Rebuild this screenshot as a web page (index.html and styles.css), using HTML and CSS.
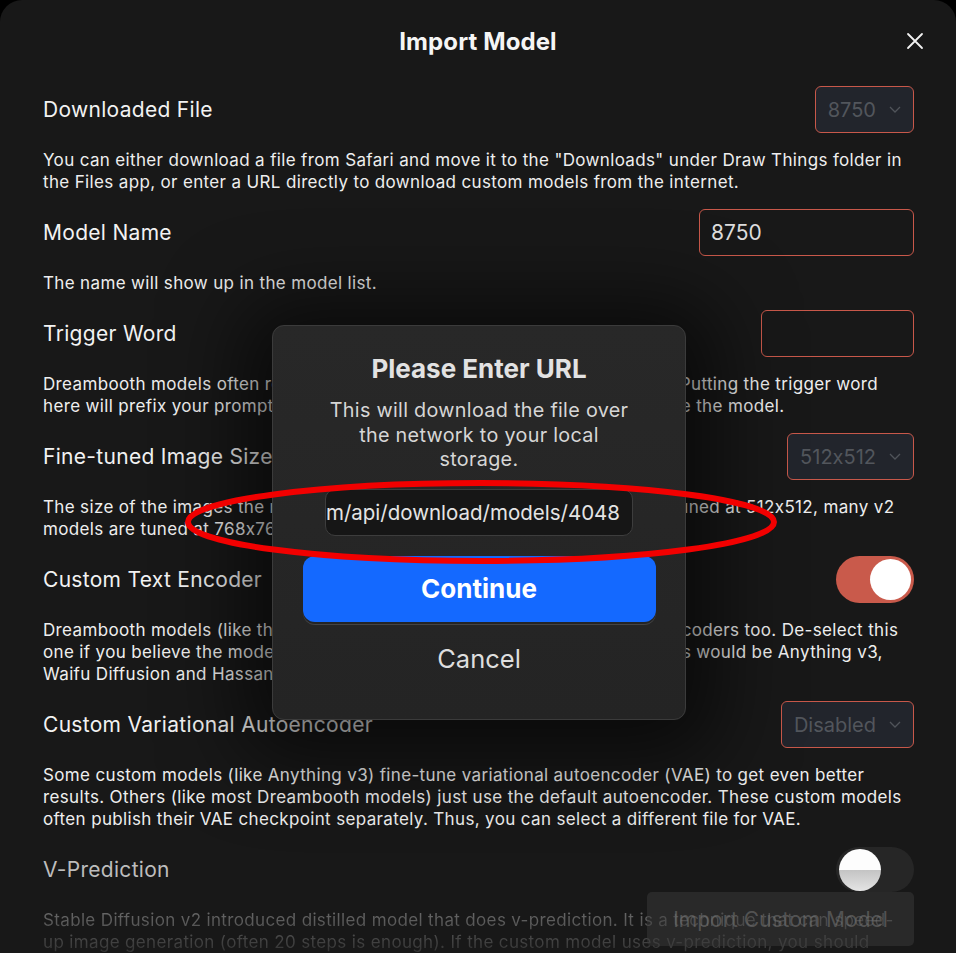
FILE: index.html
```html
<html lang="en">
<head>
    <meta charset="UTF-8">
    <meta name="viewport" content="width=device-width, initial-scale=1.0">
    <title>Import Model</title>
    <link rel="stylesheet" href="styles.css">
</head>
<body>
    <div class="sheet">
        <div class="sheet-header">
            <span></span>
            <h1 class="sheet-title">Import Model</h1>
            <button class="close-button" aria-label="Close">
                <svg width="18" height="18" viewBox="0 0 18 18"><path d="M2 2 L16 16 M16 2 L2 16" stroke="#f2f2f2" stroke-width="1.8" stroke-linecap="round"/></svg>
            </button>
        </div>

        <div class="setting">
            <div class="setting-head">
                <span class="setting-label">Downloaded File</span>
                <div class="select">8750 <svg width="12" height="7" viewBox="0 0 12 7"><path d="M1 1 L6 6 L11 1" stroke="#50545a" stroke-width="1.3" fill="none"/></svg></div>
            </div>
            <p class="setting-desc">You can either download a file from Safari and move it to the "Downloads" under Draw Things folder in<br>the Files app, or enter a URL directly to download custom models from the internet.</p>
        </div>

        <div class="setting">
            <div class="setting-head">
                <span class="setting-label">Model Name</span>
                <div class="text-field name-field">8750</div>
            </div>
            <p class="setting-desc">The name will show up in the model list.</p>
        </div>

        <div class="setting">
            <div class="setting-head">
                <span class="setting-label">Trigger Word</span>
                <div class="text-field trigger-field"></div>
            </div>
            <p class="setting-desc">Dreambooth models often require a trigger word in the prompt to work well. Putting the trigger word<br>here will prefix your prompt with the trigger word automatically when you use the model.</p>
        </div>

        <div class="setting">
            <div class="setting-head">
                <span class="setting-label">Fine-tuned Image Size</span>
                <div class="select">512x512 <svg width="12" height="7" viewBox="0 0 12 7"><path d="M1 1 L6 6 L11 1" stroke="#50545a" stroke-width="1.3" fill="none"/></svg></div>
            </div>
            <p class="setting-desc">The size of the images the model was fine-tuned at. Most of v1 models are tuned at 512x512, many v2<br>models are tuned at 768x768.</p>
        </div>

        <div class="setting">
            <div class="setting-head">
                <span class="setting-label">Custom Text Encoder</span>
                <div class="toggle on"><span class="knob"></span></div>
            </div>
            <p class="setting-desc">Dreambooth models (like the ones from Hugging Face hub) fine-tune text encoders too. De-select this<br>one if you believe the model doesn't fine-tune text encoders. Some examples would be Anything v3,<br>Waifu Diffusion and Hassan's Blend.</p>
        </div>

        <div class="setting">
            <div class="setting-head">
                <span class="setting-label">Custom Variational Autoencoder</span>
                <div class="select">Disabled <svg width="12" height="7" viewBox="0 0 12 7"><path d="M1 1 L6 6 L11 1" stroke="#50545a" stroke-width="1.3" fill="none"/></svg></div>
            </div>
            <p class="setting-desc">Some custom models (like Anything v3) fine-tune variational autoencoder (VAE) to get even better<br>results. Others (like most Dreambooth models) just use the default autoencoder. These custom models<br>often publish their VAE checkpoint separately. Thus, you can select a different file for VAE.</p>
        </div>

        <div class="setting">
            <div class="setting-head">
                <span class="setting-label dim">V-Prediction</span>
                <div class="toggle off"><span class="knob"></span></div>
            </div>
            <p class="setting-desc faded">Stable Diffusion v2 introduced distilled model that does v-prediction. It is a technique that can speed-<br>up image generation (often 20 steps is enough). If the custom model uses v-prediction, you should</p>
        </div>
    </div>

    <div class="toast">Import Custom Model</div>

    <div class="alert">
        <h2 class="alert-title">Please Enter URL</h2>
        <p class="alert-message">This will download the file over<br>the network to your local<br>storage.</p>
        <div class="url-field"><span>https://civitai.com/api/download/models/4048</span></div>
        <button class="alert-button primary">Continue</button>
        <button class="alert-button cancel">Cancel</button>
    </div>

    <svg class="highlight" width="600" height="100" viewBox="0 0 600 100">
        <ellipse cx="298" cy="46" rx="293" ry="39" fill="none" stroke="#f20000" stroke-width="6"/>
    </svg>
</body>
</html>
```

FILE: styles.css
```css
* {
    margin: 0;
    padding: 0;
    box-sizing: border-box;
}

body {
    font-family: Inter, "Noto Sans", sans-serif;
    font-feature-settings: "calt" 0;
    background-color: #000;
    color: #f2f2f2;
    height: 953px;
    overflow: hidden;
    position: relative;
}

.sheet {
    background-color: #181818;
    border-radius: 22px 22px 0 0;
    height: 100%;
    padding: 0 43px;
    overflow: hidden;
}

.sheet-header {
    display: grid;
    grid-template-columns: 1fr auto 1fr;
    align-items: center;
    height: 86px;
    padding-bottom: 4px;
}

.sheet-title {
    font-size: 24px;
    font-weight: 700;
    color: #f5f5f5;
    letter-spacing: 0.1px;
}

.close-button {
    justify-self: end;
    margin-right: -11px;
    background: none;
    border: none;
    width: 18px;
    height: 18px;
    display: flex;
}

.setting {
    padding-bottom: 16px;
}

.setting-head {
    display: flex;
    justify-content: space-between;
    align-items: center;
    height: 47px;
    margin-bottom: 16px;
}

.setting-label {
    font-size: 21px;
    letter-spacing: 0.3px;
    color: #f2f2f2;
}

.setting-label.dim {
    color: #bdbdbd;
}

.setting-desc {
    font-size: 17px;
    line-height: 22px;
    color: #eeeeee;
    white-space: nowrap;
    letter-spacing: 0.35px;
}

.setting-desc.faded {
    background: linear-gradient(#6a6a6a, #333);
    -webkit-background-clip: text;
    background-clip: text;
    color: transparent;
}

.select {
    height: 47px;
    display: flex;
    align-items: center;
    gap: 13px;
    padding: 0 12px;
    margin-right: -1px;
    border: 1.5px solid #c8584a;
    border-radius: 6px;
    background-color: #22252c;
    color: #52565c;
    font-size: 20px;
}

.text-field {
    height: 47px;
    margin-right: -1px;
    display: flex;
    align-items: center;
    padding: 0 11px;
    border: 1.5px solid #c8584a;
    border-radius: 6px;
    color: #dddddd;
    font-size: 21px;
}

.name-field {
    width: 215px;
}

.trigger-field {
    width: 153px;
}

.toggle {
    width: 78px;
    height: 47px;
    border-radius: 24px;
    display: flex;
    align-items: center;
    padding: 0 3px;
    margin-right: -1px;
}

.toggle.on {
    background-color: #c95a4b;
    justify-content: flex-end;
}

.toggle.off {
    background-color: #262626;
    justify-content: flex-start;
    height: 45px;
}

.knob {
    width: 41px;
    height: 41px;
    border-radius: 50%;
    background: #fff;
}

.toggle.off .knob {
    width: 42px;
    height: 42px;
    background: linear-gradient(#fdfdfd 49%, #c4c4c4 51%, #e4e4e4);
}

.toast {
    position: absolute;
    left: 647px;
    top: 892px;
    width: 267px;
    height: 54px;
    border-radius: 5px;
    background: rgba(58, 58, 58, 0.5);
    color: rgba(120, 120, 120, 0.55);
    font-size: 21px;
    display: flex;
    align-items: center;
    justify-content: center;
}

.alert {
    position: absolute;
    left: 272px;
    top: 325px;
    width: 414px;
    height: 395px;
    background: linear-gradient(#282828, #242424);
    border: 1px solid #3b3b3b;
    border-radius: 12px;
    box-shadow: 0 8px 80px 30px rgba(0, 0, 0, 0.6);
    display: flex;
    flex-direction: column;
    align-items: center;
    padding: 26px 30px 0;
    text-align: center;
}

.alert > * {
    flex-shrink: 0;
}

.alert-title {
    font-size: 26px;
    font-weight: 700;
    color: #e2e2e2;
    line-height: 34px;
}

.alert-message {
    font-size: 19.8px;
    line-height: 24.5px;
    color: #d6d6d6;
    margin-top: 12px;
    letter-spacing: 0.3px;
}

.url-field {
    margin-top: 17px;
    width: 308px;
    height: 47px;
    border-radius: 10px;
    background-color: #161616;
    border: 1px solid #3d3d3d;
    display: flex;
    justify-content: flex-end;
    align-items: center;
    padding-right: 12px;
    overflow: hidden;
    white-space: nowrap;
    font-size: 20.5px;
    color: #e4e4e4;
}

.alert-button {
    width: 353px;
    border: none;
    font-family: inherit;
    font-size: 25.5px;
    background: none;
}

.alert-button.primary {
    margin-top: 20px;
    height: 66px;
    border-radius: 12px;
    background-color: #1469ff;
    color: #fff;
    font-weight: 700;
    font-size: 26px;
    box-shadow: 0 2px 0 #242424, 0 3px 0 #444;
}

.alert-button.cancel {
    margin-top: 3px;
    height: 68px;
    color: #dedede;
}

.highlight {
    position: absolute;
    left: 183px;
    top: 476px;
}
```
